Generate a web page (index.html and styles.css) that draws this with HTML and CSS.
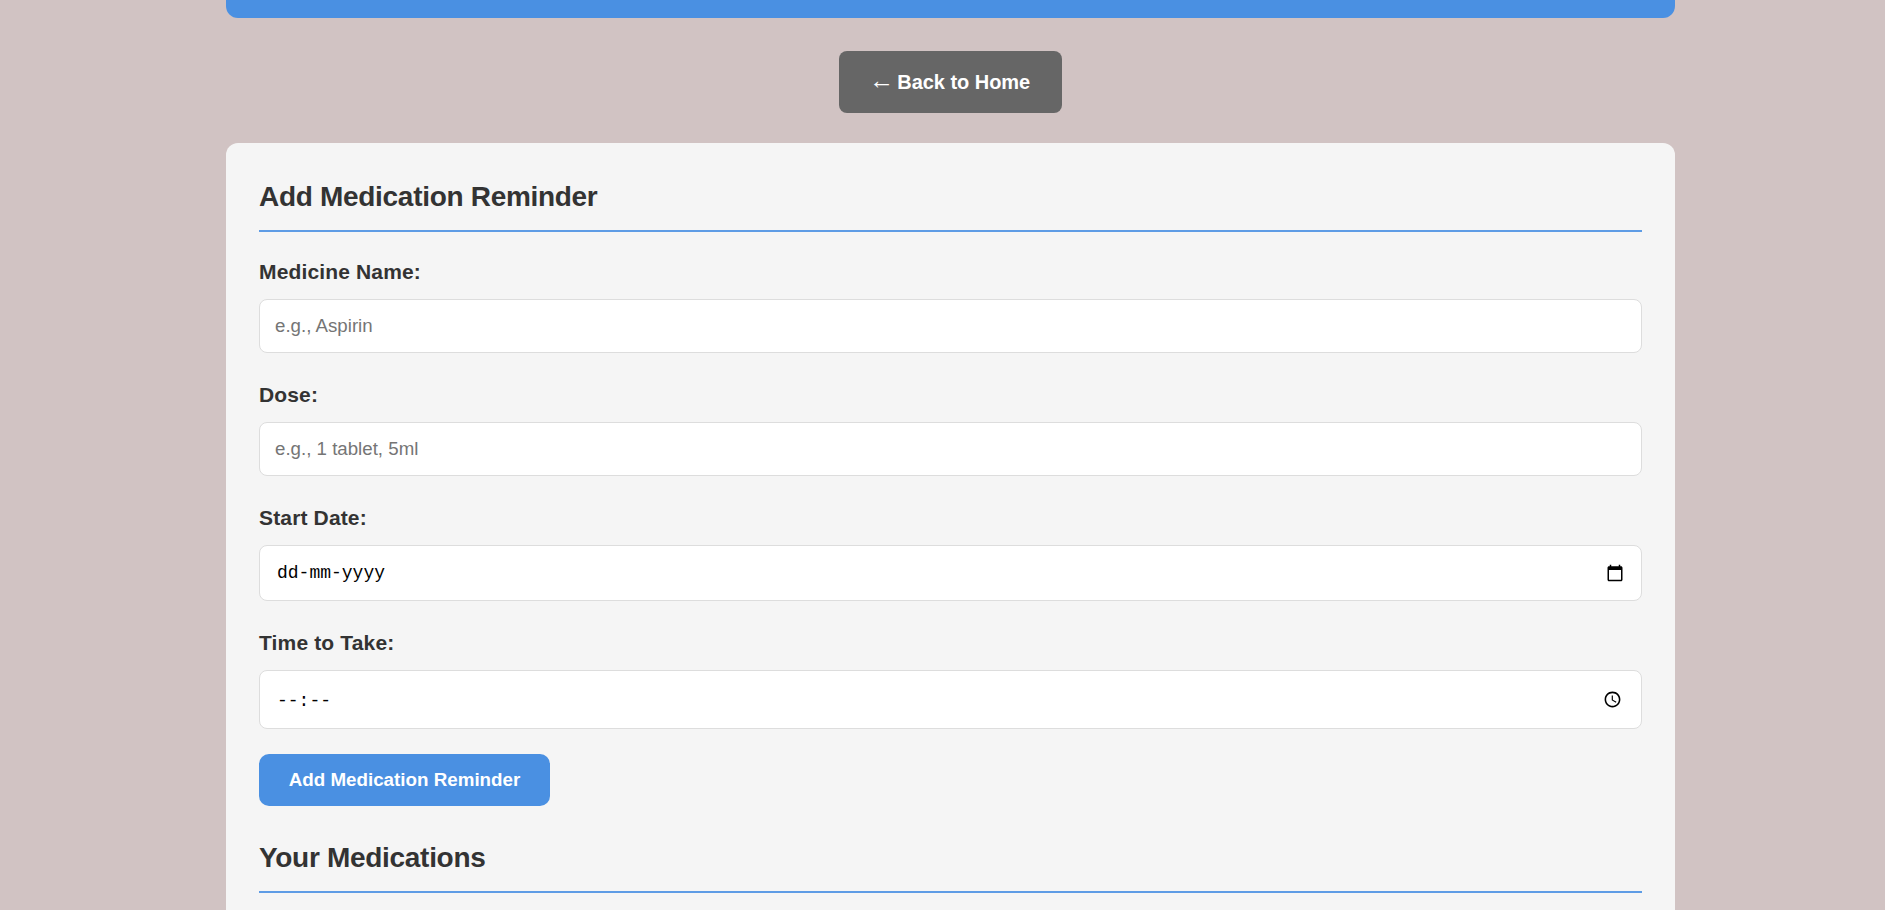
FILE: index.html
```html
<!DOCTYPE html>
<html lang="en">
<head>
<meta charset="utf-8">
<title>Medication Reminders</title>
<link rel="stylesheet" href="styles.css">
</head>
<body>
<div class="page">
  <header class="banner"></header>
  <div class="back-row"><a class="back" href="#"><span class="arrow">←</span> Back to Home</a></div>
  <main class="card">
    <h2 class="title">Add Medication Reminder</h2>
    <form class="form">
      <div class="field field-name">
        <label class="label" for="name">Medicine Name:</label>
        <input class="input" id="name" type="text" placeholder="e.g., Aspirin">
      </div>
      <div class="field field-dose">
        <label class="label" for="dose">Dose:</label>
        <input class="input" id="dose" type="text" placeholder="e.g., 1 tablet, 5ml">
      </div>
      <div class="field field-date">
        <span class="label">Start Date:</span>
        <div class="input picker picker-date">
          <span>dd-mm-yyyy</span>
          <svg class="icon-cal" viewBox="0 0 24 24" aria-hidden="true"><path d="M20 3h-1V1h-2v2H7V1H5v2H4c-1.1 0-2 .9-2 2v16c0 1.1.9 2 2 2h16c1.1 0 2-.9 2-2V5c0-1.1-.9-2-2-2zm0 18H4V8h16v13z"/></svg>
        </div>
      </div>
      <div class="field field-time">
        <span class="label">Time to Take:</span>
        <div class="input picker picker-time">
          <span>--:--</span>
          <svg class="icon-clock" viewBox="0 0 24 24" aria-hidden="true"><path d="M11.99 2C6.47 2 2 6.48 2 12s4.47 10 9.99 10C17.52 22 22 17.52 22 12S17.52 2 11.99 2zM12 20c-4.42 0-8-3.58-8-8s3.58-8 8-8 8 3.58 8 8-3.58 8-8 8zm.5-13H11v6l5.25 3.15.75-1.23-4.5-2.67z"/></svg>
        </div>
      </div>
      <button class="submit" type="button">Add Medication Reminder</button>
    </form>
    <h2 class="title title-list">Your Medications</h2>
  </main>
</div>
</body>
</html>
```

FILE: styles.css
```css
* { box-sizing: border-box; }
html, body { margin: 0; height: 100%; }
body {
  background: #d1c3c3;
  font-family: "Liberation Sans", Arial, sans-serif;
  color: #333;
  overflow: hidden;
}
.page {
  width: 1449px;
  margin-left: 226px;
  display: flex;
  flex-direction: column;
}
.banner {
  height: 18px;
  background: #4a90e2;
  border-radius: 0 0 12px 12px;
}
.back-row {
  display: flex;
  justify-content: center;
  padding: 33px 0 30px;
}
.back {
  display: block;
  height: 62px;
  width: 223px;
  padding-right: 2px;
  line-height: 62px;
  text-align: center;
  background: #666;
  color: #fff;
  font-size: 20px;
  font-weight: 700;
  letter-spacing: -0.05px;
  text-decoration: none;
  border-radius: 8px;
}
.arrow {
  font-weight: 400;
  font-size: 25px;
  line-height: 1;
  margin-right: -2px;
}
.card {
  background: #f5f5f5;
  border-radius: 12px;
  padding: 38px 33px 60px;
  height: 800px;
}
.title {
  margin: 0;
  padding-bottom: 17px;
  font-size: 28px;
  line-height: 32px;
  font-weight: 700;
  letter-spacing: -0.3px;
  color: #333;
  border-bottom: 2px solid #5e9ce5;
}
.form {
  display: flex;
  flex-direction: column;
  padding-top: 28px;
}
.field {
  display: flex;
  flex-direction: column;
}
.field-name { margin-bottom: 30px; }
.field-dose { margin-bottom: 30px; }
.field-date { margin-bottom: 30.5px; }
.field-time { margin-bottom: 25.5px; }
.label {
  font-size: 21px;
  line-height: 23px;
  font-weight: 700;
  letter-spacing: 0.15px;
  margin-bottom: 16px;
}
.input {
  height: 54px;
  width: 100%;
  padding: 0 15px;
  background: #fff;
  border: 1px solid #ddd;
  border-radius: 8px;
  font-family: "Liberation Sans", Arial, sans-serif;
  font-size: 18.7px;
  color: #000;
}
.input::placeholder { color: #757575; }
.picker {
  display: flex;
  align-items: center;
  justify-content: space-between;
  font-family: "Liberation Mono", monospace;
  font-size: 18px;
}
.picker-date { height: 55.5px; padding: 1px 17px 0; }
.picker-time { height: 58.5px; padding: 3px 19px 0 17px; }
.icon-cal { width: 18px; height: 18px; display: block; margin-top: -1px; }
.icon-clock { width: 19px; height: 19px; display: block; margin-top: -3px; }
.submit {
  width: 291px;
  height: 52px;
  background: #4a90e2;
  color: #fff;
  border: 0;
  border-radius: 10px;
  font-family: "Liberation Sans", Arial, sans-serif;
  font-size: 18.8px;
  font-weight: 700;
  padding: 0;
}
.title-list { margin-top: 35.5px; }
```
